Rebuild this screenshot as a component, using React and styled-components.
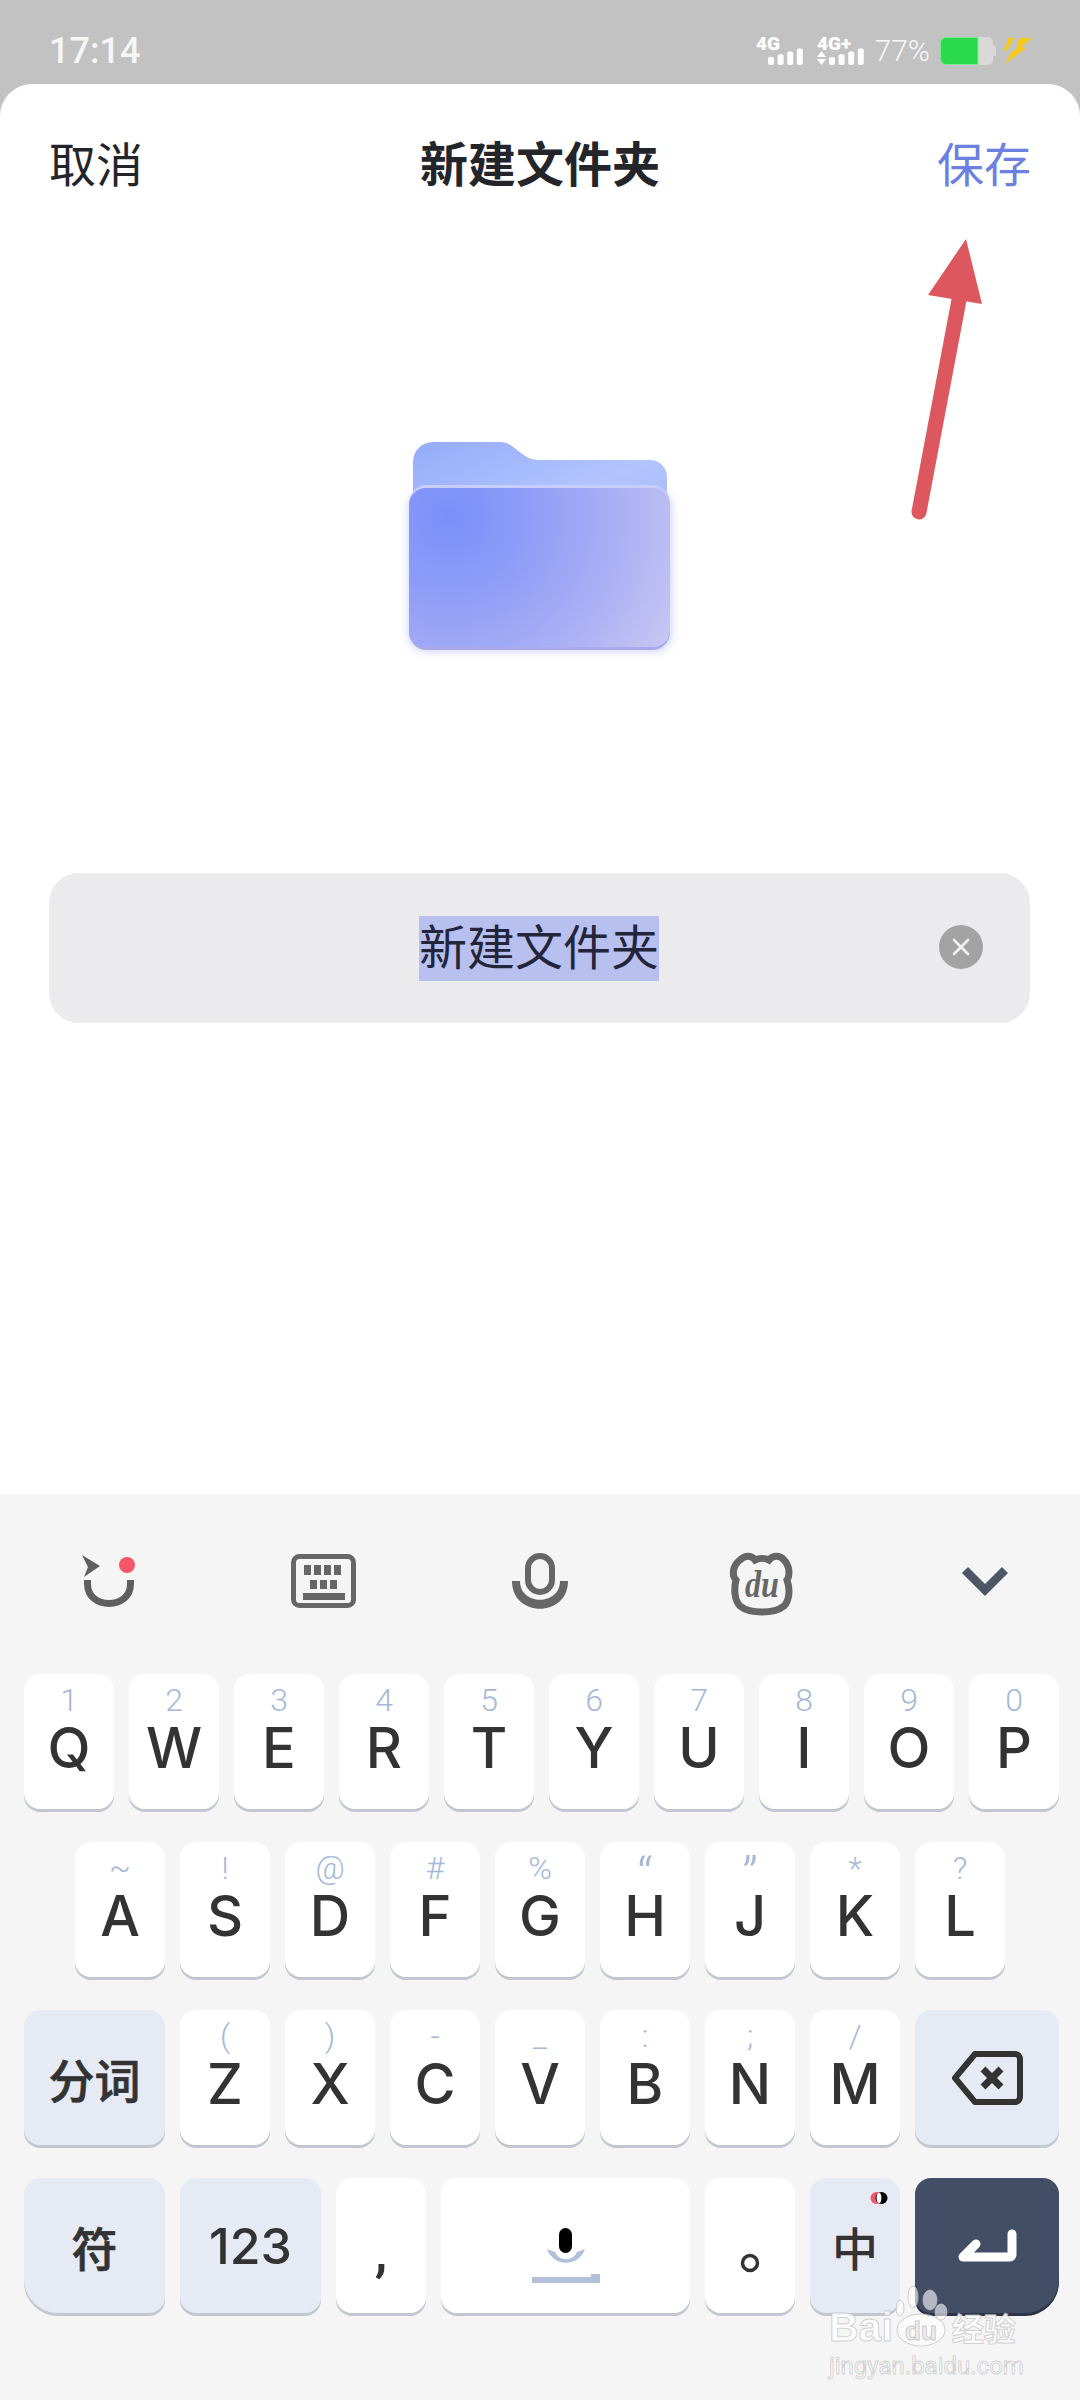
import React from "react";
import styled, { createGlobalStyle } from "styled-components";

const Global = createGlobalStyle`
  html, body { margin: 0; padding: 0; background: #c2c2c2; }
  * { box-sizing: border-box; }
`;
const cjk = `Roboto, "Noto Sans CJK SC", sans-serif`;

const Page = styled.div`
  position: relative; width: 1080px; height: 2400px; display: flex; flex-direction: column;
  background: #c2c2c2; overflow: hidden; font-family: ${cjk};
`;
const StatusBar = styled.div`
  height: 84px; flex: none; padding: 18px 48px 0 49px; display: flex; align-items: center; justify-content: space-between;
`;
const Time = styled.div`font-size: 36px; font-weight: 500; color: #f6f6f6; line-height: 40px;`;
const StatusRight = styled.div`display: flex; align-items: center;`;
const Percent = styled.div`font-size: 30px; font-weight: 300; color: #f8f8f8; margin: 0 10px 0 10px; line-height: 34px;`;
const StatusIcon = styled.svg`display: block; flex: none; margin-left: ${p => p.$ml || 0}px;`;

const Sheet = styled.div`
  flex: 1; background: #fff; border-radius: 32px 32px 0 0; display: flex; flex-direction: column; align-items: center;
`;
const Header = styled.div`
  width: 100%; height: 162px; padding: 2px 49px 0; display: flex; align-items: center; justify-content: space-between;
`;
const HeaderBtn = styled.div`font-size: 47px; line-height: 56px; color: ${p => p.$color};`;
const Title = styled.div`font-size: 48px; line-height: 56px; font-weight: 700; color: #24252b;`;
const FolderArt = styled.svg`display: block; margin-top: 184px;`;
const NameField = styled.div`
  position: relative; margin: 213px 0 0 -2px; width: 981px; height: 150px; border-radius: 30px; background: #ebebed;
  display: flex; align-items: center; justify-content: center;
`;
const Selected = styled.span`
  display: block; height: 65px; line-height: 66px; font-size: 48px; background: #b8c0f0; color: #23253a;
`;
const Clear = styled.div`
  position: absolute; right: 47px; top: 52px; width: 44px; height: 44px; border-radius: 50%; background: #a3a3a3;
  display: flex; align-items: center; justify-content: center;
`;

const Keyboard = styled.div`
  position: relative; height: 906px; flex: none; background: #f5f5f5;
`;
const Toolbar = styled.div`height: 180px; padding-top: 58px; display: flex; align-items: flex-start;`;
const ToolIcon = styled.svg`display: block; flex: none; margin-left: ${p => p.$ml}px;`;
const Rows = styled.div`display: flex; flex-direction: column; gap: 33px; padding-left: 24px;`;
const Row = styled.div`display: flex; gap: 15px; padding-left: ${p => p.$indent || 0}px;`;
const bg = { plain: "#fff", fn: "#e6eaf4", enter: "#424e66" };
const Key = styled.div`
  position: relative; flex: none; width: ${p => p.$w || 90}px; height: 135px; background: ${p => bg[p.$kind || "plain"]};
  border-radius: 16px ${p => (p.$br ? "16px 34px" : "16px 16px")} ${p => (p.$bl ? "34px" : "16px")};
  box-shadow: 0 3px 0 ${p => (p.$kind === "enter" ? "#2b3347" : "#c2c7d2")};
  display: flex; flex-direction: column; align-items: center; color: #333;
`;
const Hint = styled.div`
  margin-top: 7px; height: 38px; line-height: ${p => (p.$quote ? 56 : 38)}px; font-size: ${p => (p.$quote ? 52 : 32)}px; font-weight: 300; color: #a5b8d8;
`;
const Letter = styled.div`height: 58px; line-height: 58px; font-family: Inter, sans-serif; font-size: 56px; font-weight: 450; color: #333;`;
const Center = styled.div`
  flex: 1; width: 100%; display: flex; align-items: center; justify-content: center; padding-top: ${p => p.$pt || 0}px;
  font-size: ${p => p.$size || 46}px; font-weight: 500; color: #333; -webkit-text-stroke: ${p => (p.$thick ? "0.7px #333" : "0")};
`;
const Digits = styled.span`font-family: Inter, sans-serif; font-size: 50px; font-weight: 500;`;
const Punct = styled.div`
  font-size: ${p => p.$size}px; font-weight: 500; color: #333; margin-top: ${p => p.$top}px; line-height: 60px; height: 60px;
`;
const Toggle = styled.svg`position: absolute; top: 13px; right: 12px; display: block;`;

const PointerArrow = styled.svg`position: absolute; left: 900px; top: 230px; display: block;`;

const Watermark = styled.div`
  position: absolute; left: 829px; top: 2285px; width: 195px; pointer-events: none;
`;
const WmLine = styled.div`display: flex; align-items: flex-end; height: 62px;`;
const WmBai = styled.div`
  font: 700 41px/40px "Liberation Sans", sans-serif; color: rgba(255,255,255,.9); -webkit-text-stroke: 1px rgba(190,190,190,.7);
`;
const WmCn = styled.div`
  font: 700 32px/40px "Noto Sans CJK SC", sans-serif; color: rgba(255,255,255,.9); -webkit-text-stroke: 1px rgba(190,190,190,.7); margin-left: 4px;
`;
const WmUrl = styled.div`
  margin-top: 4px; font: 400 24px/30px Roboto, sans-serif; color: rgba(255,255,255,.9); -webkit-text-stroke: 1px rgba(190,190,190,.65); white-space: nowrap;
`;

const Sig = ({ plus, width }) => (
  <StatusIcon width={width} height="44" viewBox={`0 0 ${width} 44`} $ml={plus ? 13 : 0}>
    <text x="0" y="21" fontFamily="Roboto" fontWeight="900" fontSize="19" fill="#fff">{plus ? "4G+" : "4G"}</text>
    {plus && <path d="M0 28 L4.5 22 L9 28 Z M0 30 L9 30 L4.5 36 Z" fill="#fff" />}
    {[0, 1, 2, 3].map(i => {
      const h = 8 + i * 2.8;
      return <rect key={i} x={12 + i * 9.6} y={36 - h} width="6" height={h} rx="2" fill="#fff" />;
    })}
  </StatusIcon>
);

const row1 = [["1","Q"],["2","W"],["3","E"],["4","R"],["5","T"],["6","Y"],["7","U"],["8","I"],["9","O"],["0","P"]];
const row2 = [["~","A"],["!","S"],["@","D"],["#","F"],["%","G"],["“","H"],["”","J"],["*","K"],["?","L"]];
const row3 = [["(","Z"],[")","X"],["-","C"],["_","V"],[":","B"],[";","N"],["/","M"]];

const LetterKey = ({ h, l }) => (
  <Key><Hint $quote={h === "“" || h === "”"}>{h}</Hint><Letter>{l}</Letter></Key>
);

export default function App() {
  return (
    <Page>
      <Global />
      <StatusBar>
        <Time>17:14</Time>
        <StatusRight>
          <Sig width="48" />
          <Sig plus width="48" />
          <Percent>77%</Percent>
          <StatusIcon width="56" height="28" viewBox="0 0 56 28">
            <path d="M38 0 H48 a5 5 0 0 1 5 5 V9 H55 a1 1 0 0 1 1 1 V18 a1 1 0 0 1 -1 1 H53 V23 a5 5 0 0 1 -5 5 H38 Z" fill="#d9d9d9" />
            <path d="M6 .5 H38 V27.5 H6 a5.5 5.5 0 0 1 -5.5 -5.5 V6 A5.5 5.5 0 0 1 6 .5 Z" fill="#2ad94c" stroke="#7fe592" />
          </StatusIcon>
          <StatusIcon width="30" height="28" viewBox="0 0 30 28" $ml={6}>
            <path d="M7 0 L12 1 L6 12 L1 15 Z M17 1 L30 1 L19 10 L24 11 L3 27 L10 14 L14 13 Z" fill="#f6c915" />
          </StatusIcon>
        </StatusRight>
      </StatusBar>

      <Sheet>
        <Header>
          <HeaderBtn $color="#24252b">取消</HeaderBtn>
          <Title>新建文件夹</Title>
          <HeaderBtn $color="#6b80e0">保存</HeaderBtn>
        </Header>
        <FolderArt width="280" height="230" viewBox="0 0 280 230">
          <defs>
            <linearGradient id="back" x1="0" y1="0" x2="1" y2="0.6">
              <stop offset="0" stopColor="#94abfa" />
              <stop offset="0.8" stopColor="#b2c5fe" />
              <stop offset="1" stopColor="#aebffc" />
            </linearGradient>
            <radialGradient id="front" gradientUnits="userSpaceOnUse" cx="50" cy="85" r="260" gradientTransform="rotate(20 50 85)">
              <stop offset="0" stopColor="#7a8ffb" />
              <stop offset="0.35" stopColor="#919ff6" />
              <stop offset="0.7" stopColor="#aeb3f4" />
              <stop offset="1" stopColor="#cbc8f2" />
            </radialGradient>
            <filter id="soft" x="-20%" y="-20%" width="140%" height="140%"><feGaussianBlur stdDeviation="4" /></filter>
          </defs>
          <rect x="8" y="60" width="264" height="162" rx="18" fill="#8f9cf0" opacity="0.4" filter="url(#soft)" />
          <path d="M13 32 a20 20 0 0 1 20 -20 H100 c16 0 20 18 40 18 H250 a17 17 0 0 1 17 17 V80 H13 Z" fill="url(#back)" />
          <rect x="9" y="55" width="261" height="165" rx="18" fill="#c9cdf9" />
          <rect x="9" y="100" width="261" height="120" rx="18" fill="#a9a9ec" />
          <rect x="9" y="58" width="261" height="159" rx="17" fill="url(#front)" />
        </FolderArt>
        <NameField>
          <Selected>新建文件夹</Selected>
          <Clear>
            <svg width="20" height="20" viewBox="0 0 20 20"><path d="M3 3 L17 17 M17 3 L3 17" stroke="#f2f2f2" strokeWidth="2.6" strokeLinecap="round" /></svg>
          </Clear>
        </NameField>
      </Sheet>

      <Keyboard>
        <Toolbar>
          <ToolIcon width="56" height="64" viewBox="0 0 56 64" $ml={81}>
            <path d="M1 3 L19 14 L3 25 L7 15 Z" fill="#5f5f5f" />
            <circle cx="46" cy="13" r="8" fill="#f6566a" />
            <path d="M6.5 28 V32 C6.5 58 49.5 58 49.5 32 V28" fill="none" stroke="#5f5f5f" strokeWidth="7" />
          </ToolIcon>
          <ToolIcon width="66" height="64" viewBox="0 0 66 64" $ml={154}>
            <rect x="2.5" y="4.5" width="60" height="49" rx="6" fill="none" stroke="#666" strokeWidth="5" />
            {[13, 23, 33, 43].map(x => <rect key={x} x={x} y="13" width="7" height="10" fill="#666" />)}
            {[19, 29, 39].map(x => <rect key={x} x={x} y="28" width="7" height="9" fill="#666" />)}
            <rect x="12" y="41" width="42" height="7" fill="#666" />
          </ToolIcon>
          <ToolIcon width="56" height="64" viewBox="0 0 56 64" $ml={155}>
            <rect x="16" y="4" width="24" height="36" rx="12" fill="none" stroke="#666" strokeWidth="6" />
            <path d="M0 29 H8 C8 54 48 54 48 29 H56 C56 66 0 66 0 29 Z" fill="#666" />
          </ToolIcon>
          <ToolIcon width="68" height="64" viewBox="0 0 68 64" $ml={160}>
            <path d="M12 8 C18 2 24 4 27 8 C31 6 37 6 41 8 C45 3 52 3 56 8 C62 14 62 24 59 28 C62 36 62 48 56 54 C46 62 22 62 12 54 C6 48 6 36 8 28 C4 24 4 14 12 8 Z" fill="none" stroke="#666" strokeWidth="7" />
            <text x="34" y="45" textAnchor="middle" fontFamily="Liberation Serif" fontStyle="italic" fontWeight="700" fontSize="38" textLength="34" lengthAdjust="spacingAndGlyphs" fill="#666">du</text>
          </ToolIcon>
          <ToolIcon width="48" height="64" viewBox="0 0 48 64" $ml={165}>
            <path d="M4 18 L24 38 L44 18" fill="none" stroke="#4d5766" strokeWidth="8.5" />
          </ToolIcon>
        </Toolbar>
        <Rows>
          <Row>{row1.map(([h, l]) => <LetterKey key={l} h={h} l={l} />)}</Row>
          <Row $indent={51}>{row2.map(([h, l]) => <LetterKey key={l} h={h} l={l} />)}</Row>
          <Row>
            <Key $w={141} $kind="fn"><Center $thick>分词</Center></Key>
            {row3.map(([h, l]) => <LetterKey key={l} h={h} l={l} />)}
            <Key $w={144} $kind="fn">
              <Center>
                <svg width="72" height="54" viewBox="0 0 72 54">
                  <path d="M24 3 H64 a5 5 0 0 1 5 5 V46 a5 5 0 0 1 -5 5 H24 L4 27 Z" fill="none" stroke="#333" strokeWidth="6" strokeLinejoin="round" />
                  <path d="M32 18 L50 36 M50 18 L32 36" stroke="#333" strokeWidth="7" />
                </svg>
              </Center>
            </Key>
          </Row>
          <Row>
            <Key $w={141} $kind="fn" $bl><Center $thick>符</Center></Key>
            <Key $w={141} $kind="fn"><Center><Digits>123</Digits></Center></Key>
            <Key><Punct $size={56} $top={43}>,</Punct></Key>
            <Key $w={249}>
              <Center $pt={22}>
                <svg width="70" height="58" viewBox="0 0 70 58">
                  <path d="M16 21 a20 20 0 0 0 38 0 L46 24 a12 12 0 0 1 -22 0 Z" fill="#b1c1dc" />
                  <rect x="28" y="0" width="13" height="25" rx="6.5" fill="#000" />
                  <path d="M1 49 H60 V46 H69 V55 H1 Z" fill="#b1c1dc" />
                </svg>
              </Center>
            </Key>
            <Key>
              <Center $pt={34}>
                <svg width="22" height="22" viewBox="0 0 22 22"><circle cx="11" cy="11" r="7.5" fill="none" stroke="#333" strokeWidth="3.5" /></svg>
              </Center>
            </Key>
            <Key $kind="fn">
              <Toggle width="18" height="14" viewBox="0 0 18 14">
                <circle cx="6.5" cy="7" r="6" fill="#f0566a" /><circle cx="11.5" cy="7" r="6" fill="#000" />
                <ellipse cx="9" cy="7" rx="2.4" ry="5" fill="#fff" />
              </Toggle>
              <Center $size={46}>中</Center>
            </Key>
            <Key $w={144} $kind="enter" $br>
              <Center>
                <svg width="66" height="36" viewBox="0 0 66 36">
                  <path d="M58 6 V27 a2 2 0 0 1 -2 2 H9 L22 16" fill="none" stroke="#fff" strokeWidth="9" strokeLinecap="round" strokeLinejoin="round" />
                </svg>
              </Center>
            </Key>
          </Row>
        </Rows>
      </Keyboard>

      <PointerArrow width="100" height="300" viewBox="0 0 100 300">
        <path d="M19 282 L59 70" fill="none" stroke="#dc585e" strokeWidth="15" strokeLinecap="round" />
        <path d="M66 9 L82 74 L28 65 Z" fill="#dc585e" />
      </PointerArrow>

      <Watermark>
        <WmLine>
          <WmBai>Bai</WmBai>
          <svg width="52" height="62" viewBox="0 0 52 62" style={{ marginLeft: 3 }}>
            <g fill="rgba(255,255,255,.6)" stroke="rgba(190,190,190,.75)">
              <ellipse cx="17" cy="12" rx="5" ry="11" />
              <ellipse cx="34" cy="15" rx="7" ry="10" />
              <ellipse cx="45" cy="27" rx="6" ry="8" />
              <ellipse cx="4" cy="23" rx="4" ry="8" />
              <ellipse cx="25" cy="45" rx="24" ry="16" />
            </g>
            <text x="25" y="55" textAnchor="middle" fontFamily="Liberation Sans" fontWeight="700" fontSize="26" fill="rgba(235,235,235,.9)" stroke="rgba(190,190,190,.75)">du</text>
          </svg>
          <WmCn>经验</WmCn>
        </WmLine>
        <WmUrl>jingyan.baidu.com</WmUrl>
      </Watermark>
    </Page>
  );
}
